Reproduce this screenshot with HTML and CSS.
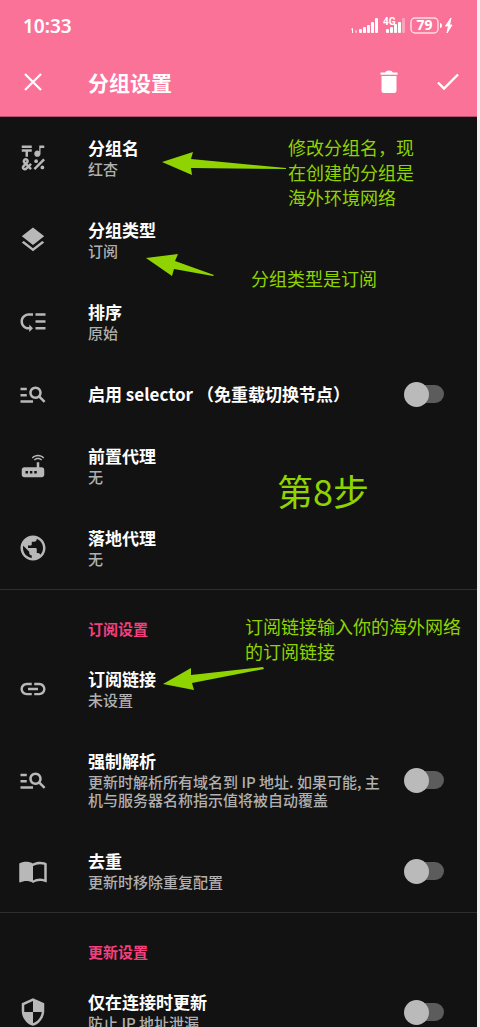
FILE: index.html
```html
<!DOCTYPE html>
<html lang="zh-CN">
<head>
<meta charset="utf-8">
<meta name="viewport" content="width=device-width, initial-scale=1">
<title>分组设置</title>
<link rel="stylesheet" href="styles.css">
</head>
<body>
<div class="screen">
  <header class="header">
    <div class="status">
      <span class="clock">10:33</span>
      <svg class="status-icons" width="106" height="20" viewBox="0 0 106 20" fill="#fff" aria-hidden="true">
        <path d="M1 13l2-1v5H2v-3z"/>
        <rect x="5" y="14" width="2" height="3" rx="1" opacity=".5"/>
        <rect x="9" y="13" width="3" height="4" rx="1"/>
        <rect x="13" y="11" width="3" height="6" rx="1"/>
        <rect x="17" y="9" width="3" height="8" rx="1"/>
        <rect x="21" y="6" width="3" height="11" rx="1"/>
        <rect x="25" y="2" width="3" height="15" rx="1"/>
        <text x="33" y="9" class="net">4G</text>
        <rect x="36" y="13" width="3" height="4" rx="1"/>
        <rect x="40" y="11" width="3" height="6" rx="1"/>
        <rect x="44" y="8" width="3" height="9" rx="1"/>
        <rect x="48" y="6" width="3" height="11" rx="1"/>
        <rect x="52" y="2" width="3" height="15" rx="1" opacity=".35"/>
        <rect x="61" y="2" width="27" height="15" rx="4" fill="none" stroke="#fff" stroke-opacity=".75" stroke-width="1.4"/>
        <path d="M90 7q2 0 2 2.500t-2 2.500z"/>
        <text x="74.500" y="14" text-anchor="middle" class="level">79</text>
        <path d="M101 2L95.500 10h3L97 17 102 9h-2.500z" stroke="#fff"/>
      </svg>
    </div>
    <div class="toolbar">
      <button class="tool" aria-label="关闭"><svg width="24" height="24" viewBox="0 0 24 24" fill="none" stroke="#fff" stroke-width="2.200"><path d="M4 4l16 16M20 4L4 20"/></svg></button>
      <h1 class="title">分组设置</h1>
      <button class="tool" aria-label="删除"><svg width="28" height="28" viewBox="0 0 28 28" fill="#fff"><path d="M5.500 4.500H10q1-2 4-2t4 2h4.500v2.300h-17zM6.500 8h15v14.500q0 2.500-2.500 2.500H9q-2.500 0-2.500-2.500z"/></svg></button>
      <button class="tool" aria-label="保存"><svg width="28" height="28" viewBox="0 0 28 28" fill="none" stroke="#fff" stroke-width="2.400"><path d="M4 14.500l6 6L24 6.500"/></svg></button>
    </div>
  </header>

  <main>
    <section class="group">
      <button class="row">
        <svg class="icon" viewBox="0 0 24 24"><path d="M3 2h8v2H3zM6 11h2V7h3V5H3v2h3zM12.400 20.180l7.780-7.780 1.410 1.420-7.770 7.770z"/><circle cx="14.500" cy="14.500" r="1.500"/><circle cx="19.500" cy="19.500" r="1.500"/><path d="M15.500 11c1.380 0 2.500-1.120 2.500-2.500V4h3V2h-4v4.510c-.42-.32-.93-.51-1.500-.51C14.120 6 13 7.120 13 8.500s1.120 2.500 2.500 2.500z"/><path fill-rule="evenodd" d="M9.740 15.960l-1.410 1.410-.71-.71.350-.35c.98-.98.98-2.560 0-3.540-.49-.49-1.130-.73-1.770-.73s-1.280.24-1.770.73c-.98.98-.98 2.560 0 3.540l.350.350-1.060 1.060c-.98.98-.98 2.560 0 3.540.5.5 1.140.74 1.780.74s1.280-.24 1.770-.73l1.060-1.060 1.410 1.410 1.410-1.410-1.410-1.410 1.410-1.410zM5.850 14.200c.12-.12.26-.15.350-.15s.23.030.350.150c.19.2.19.51 0 .71l-.35.350-.35-.36c-.19-.19-.19-.51 0-.7zm0 5.650c-.12.120-.26.150-.35.150s-.23-.03-.35-.15c-.19-.19-.19-.51 0-.71l1.060-1.060.71.710z"/></svg>
        <span class="text"><span class="name">分组名</span><span class="note">红杏</span></span>
      </button>
      <button class="row">
        <svg class="icon" viewBox="0 0 24 24"><path d="M11.990 18.540l-7.370-5.730L3 14.070l9 7 9-7-1.630-1.270zM12 16l7.360-5.730L21 9l-9-7-9 7 1.630 1.270z"/></svg>
        <span class="text"><span class="name">分组类型</span><span class="note">订阅</span></span>
      </button>
      <button class="row">
        <svg class="icon" viewBox="0 0 24 24"><path d="M14 5h8v2h-8zm0 5.500h8v2h-8zm0 5.500h8v2h-8zM2 11.500C2 15.080 4.920 18 8.500 18H9v2l3-3-3-3v2h-.5C6.020 16 4 13.980 4 11.500S6.020 7 8.500 7H12V5H8.500C4.920 5 2 7.920 2 11.500z"/></svg>
        <span class="text"><span class="name">排序</span><span class="note">原始</span></span>
      </button>
      <label class="row">
        <svg class="icon" viewBox="0 0 24 24"><path d="M7 9H2V7h5v2zm0 3H2v2h5v-2zm13.590 7l-3.830-3.830c-.8.52-1.740.83-2.760.83-2.760 0-5-2.240-5-5s2.240-5 5-5 5 2.240 5 5c0 1.020-.31 1.960-.83 2.750L22 17.590 20.590 19zM17 11c0-1.650-1.350-3-3-3s-3 1.350-3 3 1.350 3 3 3 3-1.350 3-3zM2 19h10v-2H2v2z"/></svg>
        <span class="text"><span class="name">启用 selector （免重载切换节点）</span></span>
        <input class="switch" type="checkbox">
      </label>
      <button class="row">
        <svg class="icon" viewBox="0 0 24 24"><path d="M20.200 5.900l.8-.8C19.600 3.700 17.800 3 16 3s-3.600.7-5 2.100l.8.8C13 4.800 14.500 4.200 16 4.200s3 .6 4.200 1.700zm-.9.8c-.9-.9-2.100-1.400-3.300-1.400s-2.400.5-3.300 1.400l.8.8c.7-.7 1.600-1 2.500-1s1.800.3 2.500 1zM19 13h-2V9h-2v4H5c-1.100 0-2 .9-2 2v4c0 1.100.9 2 2 2h14c1.100 0 2-.9 2-2v-4c0-1.100-.9-2-2-2zM8 18H6v-2h2zm3.500 0h-2v-2h2zm3.500 0h-2v-2h2z"/></svg>
        <span class="text"><span class="name">前置代理</span><span class="note">无</span></span>
      </button>
      <button class="row">
        <svg class="icon" viewBox="0 0 24 24"><path d="M12 2C6.480 2 2 6.480 2 12s4.480 10 10 10 10-4.480 10-10S17.520 2 12 2zm-1 17.930c-3.950-.49-7-3.850-7-7.930 0-.62.080-1.210.210-1.790L9 15v1c0 1.100.9 2 2 2v1.930zm6.900-2.540c-.26-.81-1-1.390-1.900-1.390h-1v-3c0-.55-.45-1-1-1H8v-2h2c.55 0 1-.45 1-1V7h2c1.100 0 2-.9 2-2v-.41c2.930 1.190 5 4.060 5 7.410 0 2.080-.8 3.970-2.100 5.390z"/></svg>
        <span class="text"><span class="name">落地代理</span><span class="note">无</span></span>
      </button>
    </section>

    <section class="group">
      <h2 class="heading">订阅设置</h2>
      <button class="row">
        <svg class="icon" viewBox="0 0 24 24"><path d="M3.900 12c0-1.710 1.390-3.100 3.100-3.100h4V7H7c-2.760 0-5 2.240-5 5s2.240 5 5 5h4v-1.900H7c-1.710 0-3.100-1.390-3.100-3.100zM8 13h8v-2H8v2zm9-6h-4v1.900h4c1.710 0 3.100 1.390 3.100 3.100s-1.390 3.100-3.100 3.100h-4V17h4c2.760 0 5-2.240 5-5s-2.240-5-5-5z"/></svg>
        <span class="text"><span class="name">订阅链接</span><span class="note">未设置</span></span>
      </button>
      <label class="row">
        <svg class="icon" viewBox="0 0 24 24"><path d="M7 9H2V7h5v2zm0 3H2v2h5v-2zm13.590 7l-3.830-3.830c-.8.52-1.740.83-2.760.83-2.760 0-5-2.240-5-5s2.240-5 5-5 5 2.240 5 5c0 1.020-.31 1.960-.83 2.750L22 17.590 20.590 19zM17 11c0-1.650-1.350-3-3-3s-3 1.350-3 3 1.350 3 3 3 3-1.350 3-3zM2 19h10v-2H2v2z"/></svg>
        <span class="text"><span class="name">强制解析</span><span class="note">更新时解析所有域名到 IP 地址. 如果可能, 主机与服务器名称指示值将被自动覆盖</span></span>
        <input class="switch" type="checkbox">
      </label>
      <label class="row">
        <svg class="icon" viewBox="0 0 24 24"><path d="M21 5c-1.110-.35-2.330-.5-3.500-.5-1.950 0-4.050.4-5.500 1.500-1.450-1.100-3.550-1.500-5.500-1.500S2.450 4.900 1 6v14.650c0 .25.25.5.5.5.1 0 .15-.05.25-.05C3.100 20.450 5.050 20 6.500 20c1.950 0 4.050.4 5.500 1.500 1.350-.85 3.800-1.500 5.500-1.500 1.650 0 3.350.3 4.750 1.050.1.050.15.050.25.050.25 0 .5-.25.5-.5V6c-.6-.45-1.250-.75-2-1zm0 13.500c-1.100-.35-2.300-.5-3.500-.5-1.700 0-4.150.65-5.500 1.500V8c1.350-.85 3.800-1.500 5.500-1.500 1.200 0 2.400.15 3.500.5v11.500z"/></svg>
        <span class="text"><span class="name">去重</span><span class="note">更新时移除重复配置</span></span>
        <input class="switch" type="checkbox">
      </label>
    </section>

    <section class="group">
      <h2 class="heading">更新设置</h2>
      <label class="row">
        <svg class="icon" viewBox="0 0 24 24"><path d="M12 1L3 5v6c0 5.550 3.840 10.740 9 12 5.160-1.260 9-6.450 9-12V5l-9-4zm0 10.990h7c-.53 4.120-3.280 7.790-7 8.940V12H5V6.300l7-3.110v8.800z"/></svg>
        <span class="text"><span class="name">仅在连接时更新</span><span class="note">防止 IP 地址泄漏</span></span>
        <input class="switch" type="checkbox">
      </label>
    </section>
  </main>

  <svg class="arrows" width="480" height="1027" viewBox="0 0 480 1027" fill="#8fd400" aria-hidden="true">
    <path d="M162 162L193 152 191 159 286 168 286 169 191 168 192 175z"/>
    <path d="M146 258L178 254 175 261 214 275 213 276 174 269 172 276z"/>
    <path d="M163 684L191 668 191 675 263 667 264 669 192 683 194 690z"/>
  </svg>
  <p class="callout callout-name">修改分组名，现在创建的分组是海外环境网络</p>
  <p class="callout callout-type">分组类型是订阅</p>
  <p class="callout callout-step">第8步</p>
  <p class="callout callout-link">订阅链接输入你的海外网络的订阅链接</p>
</div>
</body>
</html>
```
FILE: styles.css
```css
* {
  box-sizing: border-box;
}

body {
  margin: 0;
  padding-right: 3px;
  background: #f0f0f0;
  font-family: "Noto Sans CJK SC", sans-serif;
}

.screen {
  position: relative;
  height: 100vh;
  overflow: hidden;
  background: #121212;
}

.header {
  background: #fb7299;
  color: #fff;
  border-bottom: 1px solid #b5546f;
}

.status {
  display: flex;
  align-items: center;
  justify-content: space-between;
  height: 50px;
  padding: 2px 21px 0 23px;
}

.clock {
  font: 600 19px/24px "Noto Sans", sans-serif;
}

.net {
  font: 700 10px "Roboto", sans-serif;
}

.level {
  font: 700 14px "Noto Sans", sans-serif;
}

.toolbar {
  display: flex;
  align-items: center;
  height: 66px;
  padding: 0 14px 2px 18px;
}

.tool {
  display: flex;
  align-items: center;
  justify-content: center;
  width: 30px;
  height: 30px;
  margin-left: 29px;
  padding: 0;
  border: 0;
  background: none;
}

.tool:first-child {
  margin: 0 40px 0 0;
}

.title {
  flex: 1;
  margin: 0;
  font-size: 21px;
  line-height: 30px;
  font-weight: 700;
}

.group + .group {
  border-top: 1px solid #2e2e2e;
}

.heading {
  margin: 0;
  padding: 30px 20px 10px 88px;
  color: #f43f7f;
  font-size: 15px;
  line-height: 18px;
  font-weight: 700;
}

.row {
  display: flex;
  align-items: center;
  width: 100%;
  padding: 16px 33px 16px 18px;
  border: 0;
  background: none;
  color: #fff;
  font-family: inherit;
  text-align: left;
}

.icon {
  flex: none;
  width: 30px;
  height: 30px;
  margin-right: 40px;
  fill: #b8b8b8;
}

.text {
  display: flex;
  flex: 1;
  flex-direction: column;
  gap: 1px;
  padding: 4px 0;
}

.name {
  font-size: 17px;
  line-height: 22px;
  font-weight: 700;
}

.note {
  padding-bottom: 1px;
  color: #b0b0b0;
  font-size: 15px;
  line-height: 18px;
  font-weight: 500;
}

.switch {
  appearance: none;
  flex: none;
  display: flex;
  align-items: center;
  width: 40px;
  height: 18px;
  margin: 0 0 0 16px;
  border-radius: 9px;
  background: linear-gradient(#5c5c5c, #5c5c5c) right / 30px 18px no-repeat;
}

.switch::before {
  content: "";
  flex: none;
  width: 25px;
  height: 25px;
  border-radius: 50%;
  background: #bababa;
}

.arrows {
  position: absolute;
  top: 0;
  left: 0;
  pointer-events: none;
}

.callout {
  position: absolute;
  margin: 0;
  color: #8fd400;
  font-size: 18px;
  line-height: 25px;
  font-weight: 400;
}

.callout-name {
  top: 135px;
  left: 288px;
  width: 128px;
}

.callout-type {
  top: 266px;
  left: 251px;
}

.callout-step {
  top: 465px;
  left: 277px;
  font-size: 36px;
  line-height: 50px;
}

.callout-link {
  top: 614px;
  left: 245px;
  width: 218px;
}
```
